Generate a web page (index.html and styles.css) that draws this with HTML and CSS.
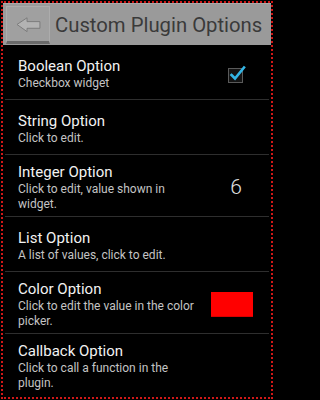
FILE: index.html
```html
<!DOCTYPE html>
<html>
<head>
<meta charset="utf-8">
<link rel="stylesheet" href="styles.css">
</head>
<body>
<div class="screen">
  <header class="bar">
    <div class="back">
      <svg width="44" height="38" viewBox="0 0 44 38">
        <polygon points="10.5,19.5 21,12.5 21,16.5 34.5,16.5 34.5,23.5 21,23.5 21,27" fill="#b3b3b3" stroke="#7a7a7a" stroke-width="1" stroke-linejoin="round"/>
      </svg>
    </div>
    <div class="title">Custom Plugin Options</div>
  </header>
  <div class="list">
    <div class="row">
      <div class="text">
        <div class="name">Boolean Option</div>
        <div class="desc">Checkbox widget</div>
      </div>
      <div class="check">
        <svg width="20" height="20" viewBox="0 0 20 20">
          <rect x="1.5" y="4.5" width="14" height="14" fill="#141414" stroke="#5a5a5a" stroke-width="1"/>
          <polyline points="4.5,11 8,14.5 17,3.5" fill="none" stroke="#33b5e5" stroke-width="2.6" stroke-linecap="square"/>
        </svg>
      </div>
    </div>
    <div class="row">
      <div class="text">
        <div class="name">String Option</div>
        <div class="desc">Click to edit.</div>
      </div>
    </div>
    <div class="row">
      <div class="text">
        <div class="name">Integer Option</div>
        <div class="desc">Click to edit, value shown in widget.</div>
      </div>
      <div class="num">6</div>
    </div>
    <div class="row">
      <div class="text">
        <div class="name">List Option</div>
        <div class="desc">A list of values, click to edit.</div>
      </div>
    </div>
    <div class="row">
      <div class="text">
        <div class="name">Color Option</div>
        <div class="desc">Click to edit the value in the color picker.</div>
      </div>
      <div class="swatch"></div>
    </div>
    <div class="row last">
      <div class="text">
        <div class="name">Callback Option</div>
        <div class="desc">Click to call a function in the plugin.</div>
      </div>
    </div>
  </div>
</div>
</body>
</html>
```

FILE: styles.css
```css
html, body {
  margin: 0;
  padding: 0;
  background: #000;
}
body {
  width: 274px;
  height: 400px;
  overflow: hidden;
  font-family: Roboto, "Liberation Sans", sans-serif;
}
.screen {
  position: relative;
  box-sizing: border-box;
  width: 274px;
  height: 400px;
  padding: 3px 3px 0 3px;
  background: #000;
}
.screen::after {
  content: "";
  position: absolute;
  top: 1px;
  left: 1px;
  right: 1px;
  bottom: 1px;
  border: 2px dotted #d01818;
  pointer-events: none;
}
.bar {
  display: flex;
  align-items: center;
  height: 42px;
  box-sizing: border-box;
  padding: 3px;
  background: #9a9a9a;
  border-top: 1px solid #a9a9a9;
}
.back {
  width: 44px;
  height: 38px;
  box-sizing: border-box;
  background: #a0a0a0;
  border: 1px solid #acacac;
  border-bottom: 3px solid #6a6a6a;
  display: flex;
  align-items: center;
  justify-content: center;
}
.back svg {
  display: block;
  margin-top: 1px;
}
.title {
  margin-left: 5px;
  font-size: 20.3px;
  color: #3a3a3a;
  white-space: nowrap;
}
.list {
  display: flex;
  flex-direction: column;
}
.row {
  display: flex;
  align-items: center;
  min-height: 55px;
  box-sizing: border-box;
  padding: 7px 0 4px 13px;
  margin: 0 2px;
  border-bottom: 1px solid #2e2e2e;
}
.row.last {
  border-bottom: none;
}
.text {
  width: 184px;
  flex: none;
}
.name {
  font-size: 15px;
  line-height: 20px;
  color: #f2f2f2;
}
.desc {
  font-size: 12px;
  line-height: 15px;
  color: #c4c4c4;
}
.check {
  margin-left: auto;
  margin-right: 22px;
  width: 20px;
  height: 20px;
}
.check svg {
  display: block;
}
.num {
  margin-left: auto;
  margin-right: 27px;
  font-size: 21px;
  font-weight: 300;
  color: #e0e0e0;
}
.swatch {
  margin-left: auto;
  margin-right: 16px;
  width: 42px;
  height: 25px;
  box-sizing: border-box;
  background: #ff0000;
  border-bottom: 1px solid #d80000;
}
```
